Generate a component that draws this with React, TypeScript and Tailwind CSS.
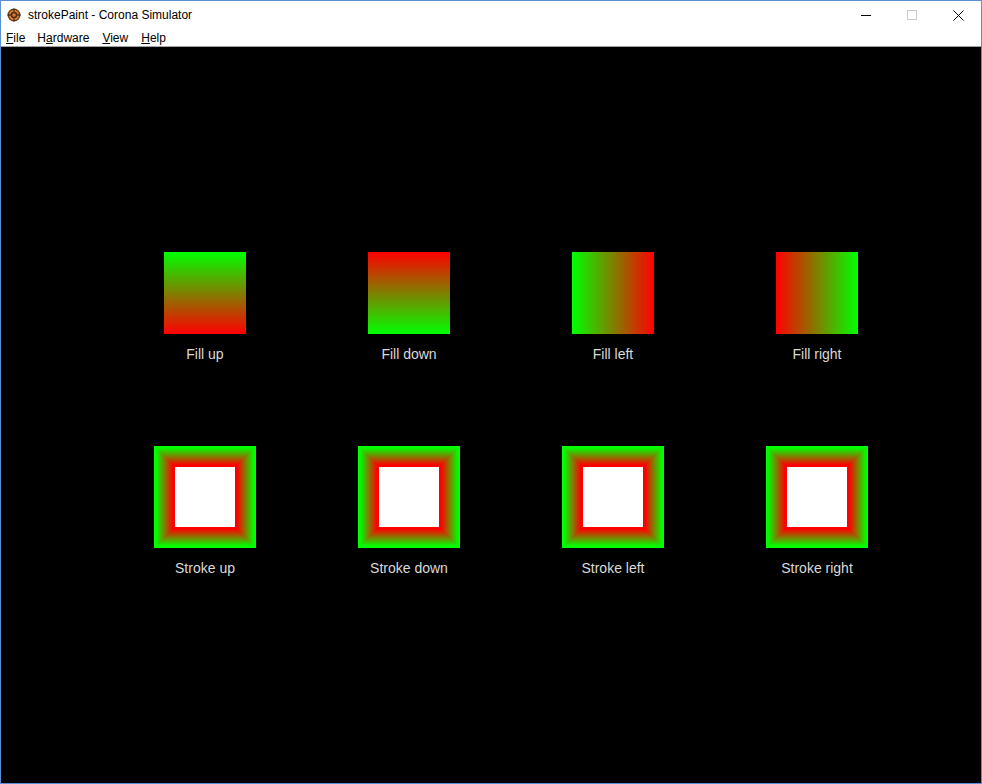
import React from "react";

const G = "#00ff00";
const R = "#ff0000";

function StrokeBox({ id }: { id: string }) {
  const s = 102;
  const w = 21;
  const a = 0.02;
  const b = 0.185;
  return (
    <svg width={s} height={s} viewBox={`0 0 ${s} ${s}`} className="block">
      <defs>
        <linearGradient id={`${id}v`} gradientUnits="userSpaceOnUse" x1="0" y1="0" x2="0" y2={s}>
          <stop offset={a} stopColor={G} />
          <stop offset={b} stopColor={R} />
          <stop offset={1 - b} stopColor={R} />
          <stop offset={1 - a} stopColor={G} />
        </linearGradient>
        <linearGradient id={`${id}h`} gradientUnits="userSpaceOnUse" x1="0" y1="0" x2={s} y2="0">
          <stop offset={a} stopColor={G} />
          <stop offset={b} stopColor={R} />
          <stop offset={1 - b} stopColor={R} />
          <stop offset={1 - a} stopColor={G} />
        </linearGradient>
      </defs>
      <rect x="0" y="0" width={s} height={s} fill={`url(#${id}v)`} />
      <polygon points={`0,0 ${w},${w} ${w},${s - w} 0,${s}`} fill={`url(#${id}h)`} />
      <polygon points={`${s},0 ${s - w},${w} ${s - w},${s - w} ${s},${s}`} fill={`url(#${id}h)`} />
      <rect x={w} y={w} width={s - 2 * w} height={s - 2 * w} fill="#ffffff" />
    </svg>
  );
}

function CoronaIcon() {
  return (
    <svg width="14" height="14" viewBox="0 0 14 14">
      <circle cx="7" cy="7" r="6.5" fill="#5a3a22" />
      <circle cx="7" cy="7" r="5.2" fill="#e07a2e" />
      <circle cx="7" cy="7" r="3.3" fill="#4a2e1a" />
      <circle cx="7" cy="7" r="1.8" fill="#e07a2e" />
      <path d="M7 0.5 V3.7 M7 10.3 V13.5 M0.5 7 H3.7 M10.3 7 H13.5" stroke="#4a2e1a" strokeWidth="1.3" />
    </svg>
  );
}

export default function App() {
  const fills = [
    { label: "Fill up", cls: "bg-[linear-gradient(to_top,#ff0000,#00ff00)]" },
    { label: "Fill down", cls: "bg-[linear-gradient(to_bottom,#ff0000,#00ff00)]" },
    { label: "Fill left", cls: "bg-[linear-gradient(to_left,#ff0000,#00ff00)]" },
    { label: "Fill right", cls: "bg-[linear-gradient(to_right,#ff0000,#00ff00)]" },
  ];
  const strokes = ["Stroke up", "Stroke down", "Stroke left", "Stroke right"];
  return (
    <div
      className="w-[982px] h-[784px] flex flex-col border border-[#5b8ed4] bg-white overflow-hidden"
      style={{ fontFamily: '"Liberation Sans", Arial, sans-serif' }}
    >
      <div className="h-[28px] flex items-center shrink-0">
        <div className="pl-[6px] pr-[7px] flex items-center">
          <CoronaIcon />
        </div>
        <div className="text-[12px] text-black leading-none">strokePaint - Corona Simulator</div>
        <div className="flex-1" />
        <div className="w-[46px] h-[28px] flex items-center justify-center">
          <div className="w-[10px] h-px bg-black" />
        </div>
        <div className="w-[46px] h-[28px] flex items-center justify-center">
          <div className="w-[10px] h-[10px] border border-[#cccccc]" />
        </div>
        <div className="w-[46px] h-[28px] flex items-center justify-center">
          <svg width="11" height="11" viewBox="0 0 11 11">
            <path d="M0.5 0.5 L10.5 10.5 M10.5 0.5 L0.5 10.5" stroke="#000" strokeWidth="1" />
          </svg>
        </div>
      </div>
      <div className="h-[17px] flex items-center text-[12px] text-black leading-none shrink-0">
        <span className="ml-[5px]"><span className="underline">F</span>ile</span>
        <span className="ml-[12px]">H<span className="underline">a</span>rdware</span>
        <span className="ml-[13px]"><span className="underline">V</span>iew</span>
        <span className="ml-[13px]"><span className="underline">H</span>elp</span>
      </div>
      <div className="h-px bg-[#a0a0a0] shrink-0" />
      <div className="flex-1 bg-black pl-[102px] pt-[205px]">
        <div className="grid grid-cols-4 w-[816px]">
          {fills.map((f) => (
            <div key={f.label} className="flex flex-col items-center">
              <div className={`w-[82px] h-[82px] ${f.cls}`} />
              <div className="mt-[12px] text-[14px] leading-[16px] text-[#dadada]">{f.label}</div>
            </div>
          ))}
        </div>
        <div className="grid grid-cols-4 w-[816px] mt-[84px]">
          {strokes.map((s, i) => (
            <div key={s} className="flex flex-col items-center">
              <StrokeBox id={`sb${i}`} />
              <div className="mt-[12px] text-[14px] leading-[16px] text-[#dadada]">{s}</div>
            </div>
          ))}
        </div>
      </div>
    </div>
  );
}
